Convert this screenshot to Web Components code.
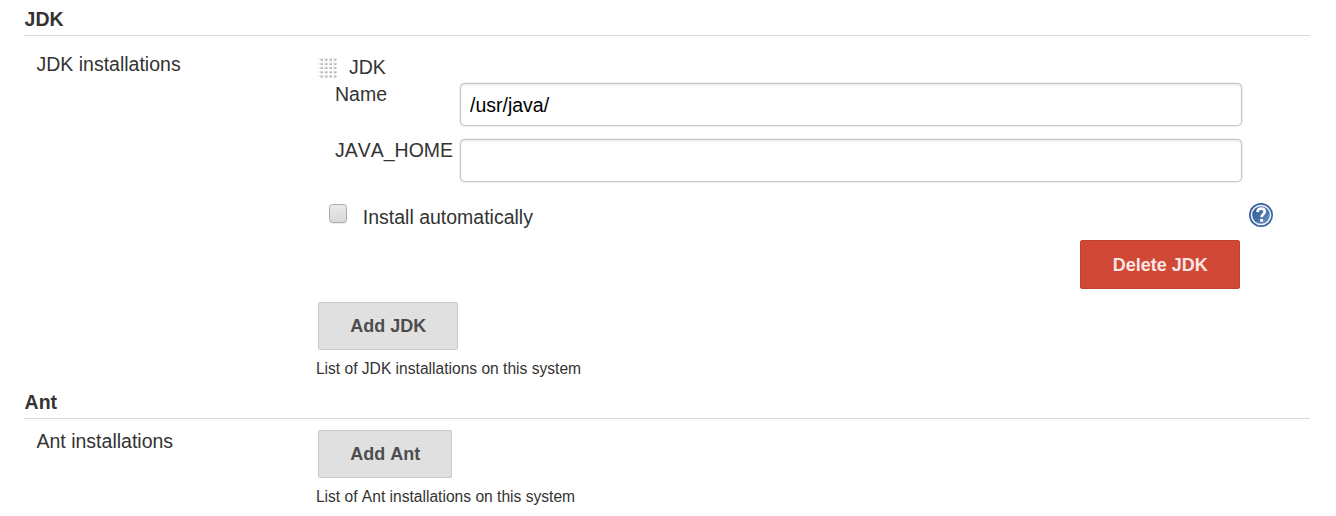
<!DOCTYPE html>
<html lang="en">
<head>
<meta charset="utf-8">
<title>Configure System</title>
<style>
  body { margin: 0; background: #fff; color: #333; font: 19.5px/24px "Liberation Sans", Arial, sans-serif; font-kerning: none; }
</style>
</head>
<body>
<config-page>
  <config-section heading="JDK">
    <config-entry label="JDK installations" description="List of JDK installations on this system" style="--label-top:16px;--content-top:19px;--entry-height:354px">
      <tool-installer name="JDK">
        <text-field label="Name" value="/usr/java/"></text-field>
        <text-field label="JAVA_HOME" value=""></text-field>
        <check-option label="Install automatically"></check-option>
        <action-button slot="actions" kind="danger" style="--w:160px;--h:49px">Delete JDK</action-button>
      </tool-installer>
      <action-button style="--w:140px">Add JDK</action-button>
    </config-entry>
  </config-section>
  <config-section heading="Ant">
    <config-entry label="Ant installations" description="List of Ant installations on this system" style="--label-top:10px;--content-top:11px;--entry-height:97px">
      <action-button style="--w:134px">Add Ant</action-button>
    </config-entry>
  </config-section>
</config-page>
<script>
const component = (tag, render) => customElements.define(tag, class extends HTMLElement {
  connectedCallback() {
    if (this.shadowRoot) return;
    const t = document.createElement('template');
    t.innerHTML = render(this);
    this.attachShadow({ mode: 'open' }).append(t.content.cloneNode(true));
  }
});

component('config-page', () => `
  <style>:host{display:block;box-sizing:border-box;height:516px;padding:7px 26px 0 24px;overflow:hidden}</style>
  <slot></slot>`);

component('config-section', el => `
  <style>
    :host{display:block}
    h2{margin:0;height:28px;padding-left:.6px;font-size:19.5px;line-height:24px;font-weight:bold;border-bottom:1px solid #dadada}
  </style>
  <h2>${el.getAttribute('heading')}</h2><slot></slot>`);

component('config-entry', el => `
  <style>
    :host{display:grid;grid-template-columns:291.5px 1fr;height:var(--entry-height)}
    .label{padding:var(--label-top) 0 0 12.5px}
    .content{padding-top:var(--content-top)}
    ::slotted(action-button){margin-left:2.5px}
    .desc{margin-top:9px;padding-left:.4px;font-size:15.6px;line-height:20px}
  </style>
  <div class="label">${el.getAttribute('label')}</div>
  <div class="content"><slot></slot><div class="desc">${el.getAttribute('description')}</div></div>`);

component('drag-grip', () => {
  let dots = '';
  for (let r = 0; r < 5; r++) for (let c = 0; c < 4; c++) {
    const x = 1.9 + c * 4.5, y = 1.4 + r * 4.45;
    dots += `<rect x="${x}" y="${y}" width="3" height="2.6" fill="#dedede"/><path d="M${x + .4} ${y + 2.6}h2.5v-2.4z" fill="#b0b0b0"/>`;
  }
  return `<style>:host{display:block;width:20px;height:22px}svg{display:block}</style>
    <svg width="20" height="22" viewBox="0 0 20 23.5" preserveAspectRatio="none">${dots}<path d="M.5 1.4v22" stroke="#ddd" stroke-width=".8" stroke-dasharray="2.3 2.15"/></svg>`;
});

component('tool-installer', el => `
  <style>
    :host{display:block;height:247px}
    .title{display:flex;height:28px;gap:10.9px;padding-left:2.5px}
    drag-grip{margin-top:2px}
    .actions{display:flex;justify-content:flex-end;padding-right:70px;margin-top:13px}
  </style>
  <div class="title"><drag-grip></drag-grip><span>${el.getAttribute('name')}</span></div>
  <slot></slot>
  <div class="actions"><slot name="actions"></slot></div>`);

component('text-field', el => `
  <style>
    :host{display:grid;grid-template-columns:124.5px 782.5px;padding-left:19.5px;height:56px}
    span{margin-top:-1px}
    input{box-sizing:border-box;width:100%;height:43px;margin:0;padding:2px 9.5px 0;border:1px solid #c6c6c6;border-radius:4.5px;
      outline:0;background:#fff;color:#000;font:inherit;font-kerning:none;box-shadow:inset 0 1.5px 2px rgba(0,0,0,.08),0 0 0 .5px #e2e2e2}
  </style>
  <span>${el.getAttribute('label')}</span>
  <input type="text" aria-label="${el.getAttribute('label')}" value="${el.getAttribute('value')}">`);

component('check-option', el => `
  <style>
    :host{display:flex;height:32px;padding:10px 37px 0 13px;box-sizing:border-box}
    i{box-sizing:border-box;width:18.5px;height:18.5px;margin:-1px 15.8px 0 0;border:1.6px solid #acacac;border-radius:3.5px;
      background:linear-gradient(#e9e9e9,#d9d9d9);box-shadow:0 1px 1px rgba(0,0,0,.08)}
    help-mark{margin:-2px 0 0 auto}
  </style>
  <i role="checkbox" aria-checked="false"></i><span>${el.getAttribute('label')}</span><help-mark></help-mark>`);

component('help-mark', () => `
  <style>:host{display:block;width:24px;height:24px}svg{display:block}</style>
  <svg width="24" height="24" viewBox="0 0 24 24">
    <defs><linearGradient id="g" x1="0" y1="0" x2="1" y2="1"><stop stop-color="#315c99"/><stop offset=".5" stop-color="#4470aa"/><stop offset="1" stop-color="#7198c8"/></linearGradient></defs>
    <circle cx="12" cy="12" r="12" fill="#3b639e"/>
    <circle cx="12" cy="12" r="10.3" fill="#f0f5fc"/>
    <circle cx="12" cy="12" r="8.8" fill="url(#g)"/>
    <path d="M8.5 9.1C8.6 6.7 10 5.7 12.1 5.7c2.2 0 3.6 1.2 3.6 3 0 2.6-3.1 2.7-3.1 5.6" fill="none" stroke="#fff" stroke-width="2.7"/>
    <rect x="11.1" y="15.9" width="3" height="2.8" rx=".5" fill="#fff"/>
  </svg>`);

component('action-button', el => {
  const danger = el.getAttribute('kind') === 'danger';
  return `
  <style>
    :host{display:block;width:var(--w);height:var(--h,48px)}
    button{box-sizing:border-box;width:100%;height:100%;margin:0;padding:0 0 0 .4px;border-radius:2px;
      font:bold 18px/24px "Liberation Sans",Arial,sans-serif;font-kerning:none;
      color:${danger ? '#fbe6e3' : '#4d4d4d'};background:${danger ? '#d14836' : '#e0e0e0'};border:1.5px solid ${danger ? '#bf4334' : '#c8c8c8'}}
  </style>
  <button type="button"><slot></slot></button>`;
});
</script>
</body>
</html>
